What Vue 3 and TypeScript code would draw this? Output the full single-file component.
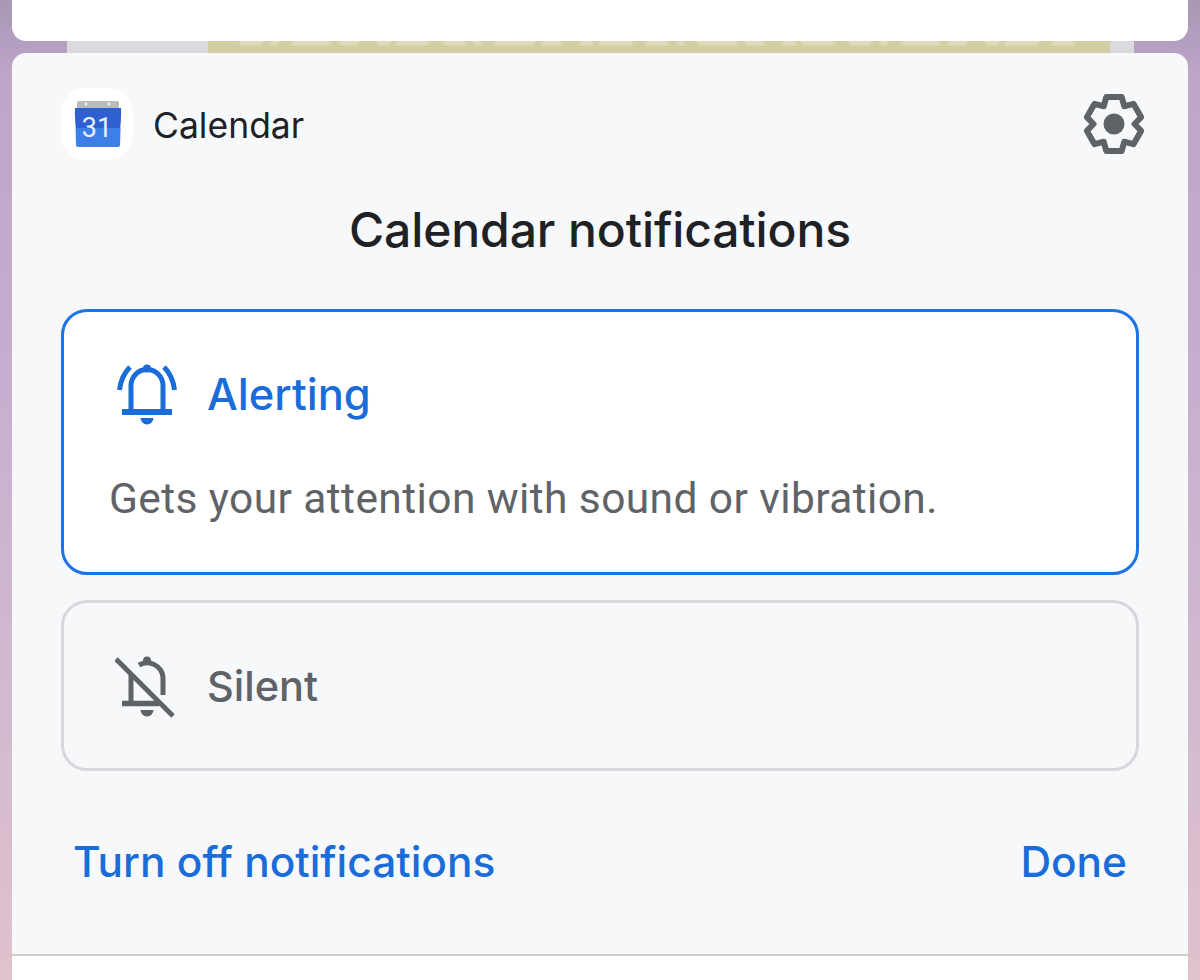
<script setup lang="ts">
const appName = 'Calendar'

// Six blunt teeth: two outer corners for each tooth and one valley between teeth.
function gearPath(): string {
  const cx = 32
  const cy = 32
  const pts: string[] = []
  const at = (deg: number, r: number) => {
    const rad = ((deg - 90) * Math.PI) / 180
    return `${(cx + r * Math.cos(rad)).toFixed(2)} ${(cy + r * Math.sin(rad)).toFixed(2)}`
  }
  for (let i = 0; i < 6; i++) {
    const a = i * 60
    pts.push(at(a - 16, 28), at(a + 16, 28), at(a + 30, 20.5))
  }
  return `M${pts.join('L')}z`
}
const gear = gearPath()
</script>

<template>
  <div class="screen">
    <div class="top-card"></div>
    <div class="strip">
      <div class="strip-side"></div>
      <div class="strip-mid"><div class="strip-band"></div></div>
      <div class="strip-side right"></div>
    </div>
    <section class="panel">
      <header class="head">
        <div class="app-icon">
          <svg width="50" height="50" viewBox="0 0 50 50">
            <path d="M6.500 2h39a1.500 1.500 0 0 1 1.500 1.500V10H5V3.500A1.500 1.500 0 0 1 6.500 2z" fill="#b9bbbe"/>
            <circle cx="14" cy="5" r="1.500" fill="#eef0f3"/>
            <circle cx="37" cy="5" r="1.500" fill="#eef0f3"/>
            <path d="M3 9h46c.4 7-.2 14-.8 20H3.800C3.200 23 2.600 16 3 9z" fill="#2f5fd0"/>
            <path d="M3.600 29h45l-.6 17a2 2 0 0 1-2 2H6a2 2 0 0 1-2-2z" fill="#3d7fe8"/>
          </svg>
          <span class="cal-num">31</span>
        </div>
        <span class="app-name">{{ appName }}</span>
        <svg class="gear" width="64" height="64" viewBox="0 0 64 64" fill="none">
          <path :d="gear" stroke="#5f6368" stroke-width="6" stroke-linejoin="round"/>
          <circle cx="32" cy="32" r="10.500" fill="#5f6368"/>
        </svg>
      </header>

      <h1 class="title">Calendar notifications</h1>

      <div class="option active">
        <div class="opt-row">
          <svg class="bell" width="64" height="64" viewBox="0 0 64 64" fill="none">
            <path d="M16 49V23.500a16 16 0 0 1 32 0V49" stroke="currentColor" stroke-width="5"/>
            <circle cx="32" cy="6.500" r="4" fill="currentColor"/>
            <rect x="7" y="47" width="50" height="6" fill="currentColor"/>
            <path d="M25.500 56h13a6.500 6.500 0 0 1-13 0z" fill="currentColor"/>
            <path d="M4.500 28C5.500 19 9 11 15 5M59.500 28C58.500 19 55 11 49 5" stroke="currentColor" stroke-width="5"/>
          </svg>
          <span class="opt-label alerting">Alerting</span>
        </div>
        <p class="opt-desc">Gets your attention with sound or vibration.</p>
      </div>

      <div class="option">
        <div class="opt-row">
          <svg class="bell" width="64" height="64" viewBox="0 0 64 64" fill="none">
            <path d="M16 50V21M24 11a16 16 0 0 1 24 12.500V41" stroke="currentColor" stroke-width="5"/>
            <circle cx="32" cy="6.500" r="4" fill="currentColor"/>
            <path d="M7 49.500h37" stroke="currentColor" stroke-width="5.500"/>
            <path d="M25.500 56h13a6.500 6.500 0 0 1-13 0z" fill="currentColor"/>
            <path d="M1 5l57 57" stroke="currentColor" stroke-width="5"/>
          </svg>
          <span class="opt-label">Silent</span>
        </div>
      </div>

      <footer class="actions">
        <span class="action">Turn off notifications</span>
        <span class="action">Done</span>
      </footer>
    </section>
    <div class="nav"></div>
  </div>
</template>

<style>
html, body { margin: 0; padding: 0; }
</style>

<style scoped>
.screen {
  width: 1200px;
  height: 980px;
  overflow: hidden;
  display: flex;
  flex-direction: column;
  align-items: center;
  background: linear-gradient(180deg, #a897b5 0%, #bda6c8 8%, #c4add0 35%, #d3b9cf 70%, #dfc2cd 100%);
  font-family: Roboto, "Liberation Sans", sans-serif;
}
.top-card {
  width: 1176px;
  height: 41px;
  flex: none;
  background: #fff;
  border-radius: 0 0 14px 14px;
}
.strip {
  width: 1067px;
  height: 12px;
  flex: none;
  display: flex;
  margin-left: 1px;
}
.strip-side { width: 141px; background: #d9d9de; }
.strip-side.right { width: 24px; }
.strip-mid {
  flex: 1;
  background: #d3cda3;
  overflow: hidden;
  padding: 0 30px 0 32px;
}
.strip-band {
  height: 4px;
  background: repeating-linear-gradient(90deg,
    #e4dfc3 0 22px, #d3cda3 22px 31px, #e4dfc3 31px 38px, #d3cda3 38px 52px,
    #e4dfc3 52px 91px, #d3cda3 91px 99px, #e4dfc3 99px 118px, #d3cda3 118px 137px,
    #e4dfc3 137px 150px, #d3cda3 150px 156px, #e4dfc3 156px 189px, #d3cda3 189px 203px);
  filter: blur(1.5px);
}
.panel {
  width: 1176px;
  height: 903px;
  flex: none;
  box-sizing: border-box;
  background: #f7f8fa;
  border-radius: 14px 14px 0 0;
  padding: 35px 49px 0;
  border-bottom: 2px solid #cfcfcf;
}
.head {
  display: flex;
  align-items: center;
  height: 72px;
}
.app-icon {
  width: 72px;
  height: 72px;
  flex: none;
  position: relative;
  display: flex;
  align-items: center;
  justify-content: center;
  background: #fff;
  border-radius: 24px;
}
.cal-num {
  position: absolute;
  left: 0;
  right: 0;
  top: 24px;
  text-align: center;
  color: #e8eefb;
  font-size: 27px;
  line-height: 32px;
}
.app-name {
  margin: 2px 0 0 20px;
  font-size: 35.5px;
  color: #202124;
  font-family: Inter, "Open Sans", sans-serif;
}
.gear {
  margin-left: auto;
  margin-right: -7px;
}
.title {
  margin: 42px 0 0;
  text-align: center;
  font-family: Inter, "Open Sans", sans-serif;
  font-size: 48px;
  line-height: 56px;
  font-weight: 500;
  letter-spacing: -0.1px;
  color: #202124;
}
.option {
  box-sizing: border-box;
  width: 1078px;
  height: 171px;
  margin-top: 25px;
  border: 3px solid #d6d8db;
  border-radius: 26px;
  padding: 51px 49px 0 51px;
  color: #5f6368;
}
.option.active {
  height: 266px;
  margin-top: 51px;
  border-color: #1a73e8;
  background: #fff;
  color: #1a6dd8;
  padding-top: 50px;
}
.opt-row {
  display: flex;
  align-items: center;
  height: 64px;
  gap: 28px;
}
.bell { flex: none; }
.opt-label {
  font-family: Inter, "Open Sans", sans-serif;
  font-size: 41.5px;
  font-weight: 500;
}
.opt-label.alerting {
  font-size: 43.5px;
}
.opt-desc {
  margin: 49px 0 0 -6px;
  font-size: 42.5px;
  line-height: 48px;
  letter-spacing: 0.4px;
  color: #5f6368;
}
.actions {
  display: flex;
  justify-content: space-between;
  margin-top: 66px;
  padding: 0 12px;
}
.action {
  font-family: Inter, "Open Sans", sans-serif;
  font-size: 42.4px;
  line-height: 50px;
  font-weight: 500;
  color: #1a6dd8;
}
.nav {
  width: 1176px;
  flex: 1;
  background: #fff;
}
</style>
